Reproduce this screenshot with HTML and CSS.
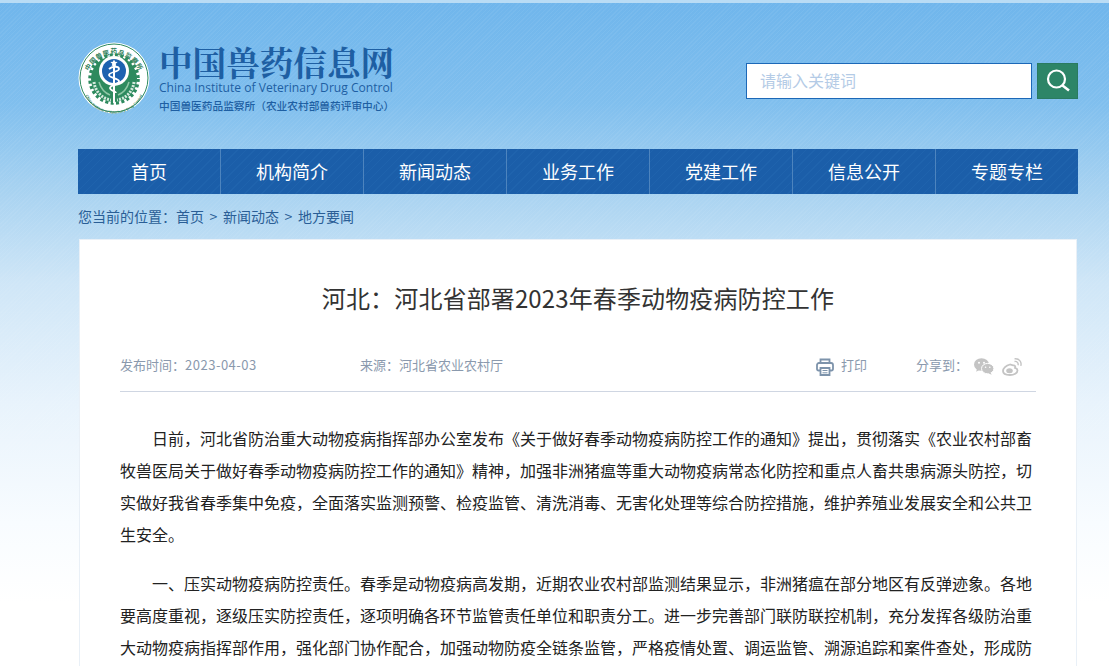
FILE: index.html
```html
<!DOCTYPE html>
<html lang="zh-CN">
<head>
    <meta charset="UTF-8">
    <title>河北省部署2023年春季动物疫病防控工作</title>
    <link rel="stylesheet" href="styles.css">
</head>
<body>
    <div class="page">
        <!-- logo + search -->
        <header class="top">
            <div class="logo">
                <svg class="emblem" width="72" height="72" viewBox="0 0 72 72">
                    <defs>
                        <path id="arc-top" d="M8.500 40a27.500 27.500 0 1 1 55 0"/>
                        <path id="arc-bottom" d="M4.500 40a31.500 31.500 0 0 0 63 0"/>
                    </defs>
                    <circle cx="36" cy="36" r="35.500" fill="#fff"/>
                    <circle cx="36" cy="36" r="34" fill="none" stroke="#2d8a5e" stroke-width="1"/>
                    <text class="emblem-cn"><textPath href="#arc-top" startOffset="50%" text-anchor="middle">中国兽医药品监察所</textPath></text>
                    <text class="emblem-en"><textPath href="#arc-bottom" startOffset="50%" text-anchor="middle">China Institute of Veterinary Drug Control</textPath></text>
                    <!-- gear and green field -->
                    <circle cx="36" cy="37" r="24" fill="none" stroke="#2d8a5e" stroke-width="3.500" stroke-dasharray="3 2.400"/>
                    <circle cx="36" cy="37" r="23" fill="#2d8a5e"/>
                    <path d="M16 40c1 10 9 17 17 18M56 40c-1 10-9 17-17 18" fill="none" stroke="#d5eadd" stroke-width="3" stroke-dasharray="2 1.200"/>
                    <path d="M21 40c2 7 6 11 11 13M51 40c-2 7-6 11-11 13" fill="none" stroke="#8fc7a6" stroke-width="1.500"/>
                    <circle cx="36" cy="29" r="15" fill="#fff"/>
                    <circle cx="36" cy="29" r="12" fill="#1d62b0"/>
                    <path d="M36 23v38" stroke="#fff" stroke-width="2"/>
                    <path d="M31 27c3-3 10-3 10 0s-10 3-10 6s9 3 10 6s-9 4-9 7s6 3 6 5" fill="none" stroke="#fff" stroke-width="1.800"/>
                    <path d="M36 17.500l1.100 2.300l2.500.300l-1.900 1.700l.6 2.500l-2.300-1.300l-2.300 1.300l.6-2.500l-1.900-1.700l2.500-.300z" fill="#fff"/>
                </svg>
                <div class="logo-text">
                    <div class="logo-cn">中国兽药信息网</div>
                    <div class="logo-en">China Institute of Veterinary Drug Control</div>
                    <div class="logo-sub">中国兽医药品监察所（农业农村部兽药评审中心）</div>
                </div>
            </div>
            <form class="search">
                <div class="search-input">请输入关键词</div>
                <button class="search-btn" type="button">
                    <svg width="28" height="28" viewBox="0 0 28 28" fill="none" stroke="#fff" stroke-width="2.200">
                        <circle cx="12.500" cy="12" r="8.500"/>
                        <path d="M18.500 18.500l6.500 5" stroke-width="2.600"/>
                    </svg>
                </button>
            </form>
        </header>

        <nav class="nav">
            <a>首页</a>
            <a>机构简介</a>
            <a>新闻动态</a>
            <a>业务工作</a>
            <a>党建工作</a>
            <a>信息公开</a>
            <a>专题专栏</a>
        </nav>

        <div class="crumb">
            <span>您当前的位置：</span>
            <a>首页</a>
            <span class="crumb-sep">&gt;</span>
            <a>新闻动态</a>
            <span class="crumb-sep">&gt;</span>
            <a>地方要闻</a>
        </div>

        <main class="card">
            <h1 class="title">河北：河北省部署2023年春季动物疫病防控工作</h1>
            <div class="meta">
                <span class="meta-date">发布时间：<span class="meta-num">2023-04-03</span></span>
                <span class="meta-source">来源：河北省农业农村厅</span>
                <span class="meta-print">
                    <svg class="print-icon" width="18" height="18" viewBox="0 0 18 18" fill="none" stroke="#7d93ab" stroke-width="1.800">
                        <path d="M4.500 5V1.500h9V5"/>
                        <path d="M4 12.500H2.500A1.500 1.500 0 0 1 1 11V7a2 2 0 0 1 2-2h12a2 2 0 0 1 2 2v4a1.500 1.500 0 0 1-1.500 1.500H14"/>
                        <path d="M4.500 10h9v7h-9z"/>
                        <path d="M6.500 12.500h5M6.500 14.800h5" stroke-width="1"/>
                    </svg>
                    打印
                </span>
                <span class="meta-share">分享到：</span>
                <svg class="share-icon" width="20" height="17" viewBox="0 0 20 17" fill="#c4c4c4">
                    <ellipse cx="7.500" cy="6.500" rx="7.500" ry="6.300"/>
                    <path d="M3 10.500l-.8 3.300l3.500-2z"/>
                    <ellipse cx="13.700" cy="10.600" rx="6.200" ry="5.200" stroke="#fff" stroke-width="1"/>
                    <path d="M16.500 14.500l1.200 2.300l-3.500-1.500z"/>
                    <circle cx="5" cy="4.800" r="1" fill="#fff"/>
                    <circle cx="10" cy="4.800" r="1" fill="#fff"/>
                    <circle cx="11.600" cy="9.300" r=".8" fill="#fff"/>
                    <circle cx="15.800" cy="9.300" r=".8" fill="#fff"/>
                </svg>
                <svg class="share-icon" width="20" height="18" viewBox="0 0 20 18" fill="none" stroke="#c4c4c4">
                    <path d="M8 6.500c-4 1-7 4-7 6.500c0 2.500 3 4 7 4s7.500-2 7.500-4.500c0-1.800-1.800-2.300-2.500-2.600c.6-1.500 0-3-2-2.500z" stroke-width="1.800"/>
                    <ellipse cx="7.500" cy="12.800" rx="3.300" ry="2.500" fill="#c4c4c4" stroke="none"/>
                    <path d="M12.500 3.500c2.500-.5 4.200 1.500 3.500 3.800" stroke-width="1.400"/>
                    <path d="M12.500 .9c4.500-.7 7.500 3 6.300 7" stroke-width="1.400"/>
                </svg>
            </div>
            <article class="content">
                <p>日前，河北省防治重大动物疫病指挥部办公室发布《关于做好春季动物疫病防控工作的通知》提出，贯彻落实《农业农村部畜牧兽医局关于做好春季动物疫病防控工作的通知》精神，加强非洲猪瘟等重大动物疫病常态化防控和重点人畜共患病源头防控，切实做好我省春季集中免疫，全面落实监测预警、检疫监管、清洗消毒、无害化处理等综合防控措施，维护养殖业发展安全和公共卫生安全。</p>
                <p>一、压实动物疫病防控责任。春季是动物疫病高发期，近期农业农村部监测结果显示，非洲猪瘟在部分地区有反弹迹象。各地要高度重视，逐级压实防控责任，逐项明确各环节监管责任单位和职责分工。进一步完善部门联防联控机制，充分发挥各级防治重大动物疫病指挥部作用，强化部门协作配合，加强动物防疫全链条监管，严格疫情处置、调运监管、溯源追踪和案件查处，形成防</p>
            </article>
        </main>
    </div>
</body>
</html>
```

FILE: styles.css
```css
* {
    box-sizing: border-box;
}

html, body {
    margin: 0;
    height: 100%;
}

body {
    font-family: "Noto Sans CJK SC", "Liberation Sans", sans-serif;
    overflow: hidden;
    background: #fff;
}

.page {
    height: 666px;
    overflow: hidden;
    padding: 0 31px 0 78px;
    border-top: 3px solid #b9dcf5;
    background:
        repeating-linear-gradient(135deg, rgba(255, 255, 255, .05) 0 1px, rgba(255, 255, 255, 0) 1px 3px) 0 0 / 100% 450px no-repeat,
        linear-gradient(180deg, #70b6ec 0, #80bfee 100px, #a9d3f1 190px, #cfe6f7 280px, #e8f3fc 400px, #f8fcff 520px, #fff 600px);
}

/* 顶部 */
.top {
    display: flex;
    justify-content: space-between;
    height: 146px;
}

.logo {
    display: flex;
    margin-top: 37px;
    height: 76px;
}

.emblem {
    margin: 2px 0 0 0;
}

.emblem-cn {
    font-size: 6.500px;
    font-weight: 700;
    letter-spacing: .6px;
    fill: #2d7d58;
}

.emblem-en {
    font-family: "Liberation Sans", sans-serif;
    font-size: 3.600px;
    font-weight: 700;
    fill: #2d7d58;
}

.logo-text {
    margin-left: 9px;
    color: #1e5fa3;
    white-space: nowrap;
}

.logo-cn {
    font-family: "Noto Serif CJK SC", "Noto Sans CJK SC", sans-serif;
    font-size: 33.600px;
    font-weight: 700;
    line-height: 36px;
    margin-top: 4px;
}

.logo-en {
    font-family: "Open Sans", "Liberation Sans", sans-serif;
    font-size: 12.100px;
    line-height: 16px;
}

.logo-sub {
    font-size: 10.700px;
    font-weight: 500;
    line-height: 15px;
    margin-top: 2px;
}

.search {
    display: flex;
    gap: 5px;
    margin-top: 60px;
    height: 36px;
}

.search-input {
    width: 286px;
    height: 36px;
    background: #fff;
    border: 1px solid #1c68b7;
    padding-left: 13px;
    font-size: 16px;
    line-height: 33px;
    color: #b4cbe6;
}

.search-btn {
    width: 41px;
    height: 36px;
    padding: 0;
    display: flex;
    align-items: center;
    justify-content: center;
    background: #2d8567;
    border: 1px solid #2a7a60;
}

/* 导航 */
.nav {
    display: flex;
    height: 45px;
    background: repeating-linear-gradient(135deg, #1b5ea9 0 5px, #1f63ad 5px 6px);
}

.nav a {
    flex: 0 0 143px;
    text-align: center;
    font-size: 18px;
    line-height: 45px;
    color: #fff;
    border-right: 1px solid #4d84be;
}

.nav a:last-child {
    flex-basis: 142px;
    border-right: 0;
}

.crumb {
    display: flex;
    height: 45px;
    font-size: 14px;
    line-height: 45px;
    color: #2a5e96;
}

.crumb-sep {
    width: 19px;
    text-align: center;
}

/* 正文卡片 */
.card {
    margin: 0 1px;
    height: 430px;
    background: #fff;
    padding: 0 41px;
    border: 1px solid #e9f0f7;
    border-bottom: 0;
}

.title {
    margin: 0;
    padding-top: 39px;
    font-size: 24px;
    font-weight: 400;
    letter-spacing: .13px;
    line-height: 38px;
    text-align: center;
    color: #333;
}

.meta {
    display: flex;
    align-items: center;
    height: 43px;
    margin: 32px -1px 0;
    padding-bottom: 11px;
    border-bottom: 1px solid #cfd6e2;
    font-size: 13px;
    color: #8a99ad;
}

.meta-date {
    width: 240px;
    margin-bottom: 1px;
}

.meta-num {
    letter-spacing: .5px;
}

.meta-source {
    width: 456px;
    margin-bottom: 1px;
}

.meta-print {
    display: flex;
    align-items: center;
    gap: 7px;
    width: 100px;
}

.print-icon {
    margin-top: 4px;
}

.meta-share {
    width: 58px;
}

.share-icon {
    margin: 4px 8px 0 0;
}

.content {
    padding-top: 30px;
    margin-left: -1px;
}

.content p {
    margin: 0 0 17px;
    font-size: 16px;
    line-height: 32px;
    text-indent: 2em;
    color: #222;
}
```
